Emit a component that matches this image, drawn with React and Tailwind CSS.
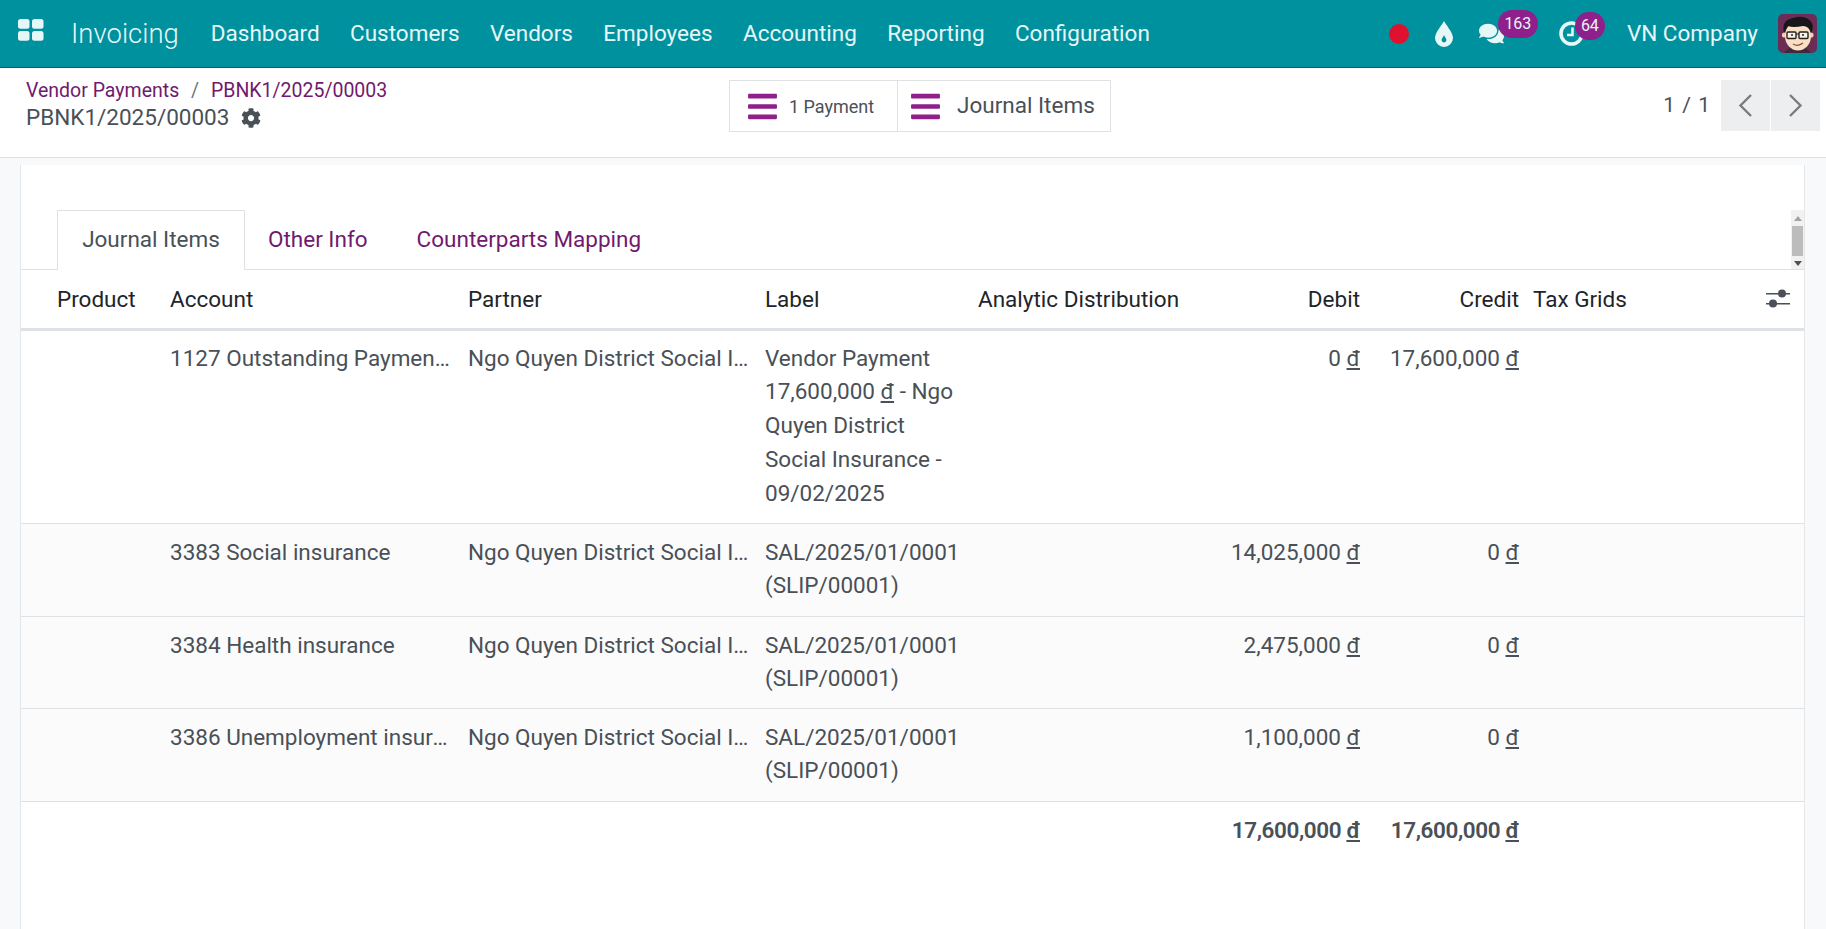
import React from 'react';
import { FaBars, FaCog, FaComments } from 'react-icons/fa';

const menuItems = ['Dashboard', 'Customers', 'Vendors', 'Employees', 'Accounting', 'Reporting', 'Configuration'];

const rows = [
  { account: '1127 Outstanding Payments Account', label: ['Vendor Payment', '17,600,000 ₫ - Ngo', 'Quyen District', 'Social Insurance -', '09/02/2025'], debit: '0', credit: '17,600,000', height: 'h-[194px]', pad: 'pt-[11px]' },
  { account: '3383 Social insurance', label: ['SAL/2025/01/0001', '(SLIP/00001)'], debit: '14,025,000', credit: '0', height: 'h-[93px]', pad: 'pt-[12px]', shaded: true },
  { account: '3384 Health insurance', label: ['SAL/2025/01/0001', '(SLIP/00001)'], debit: '2,475,000', credit: '0', height: 'h-[92px]', pad: 'pt-[12px]', shaded: true },
  { account: '3386 Unemployment insurance', label: ['SAL/2025/01/0001', '(SLIP/00001)'], debit: '1,100,000', credit: '0', height: 'h-[93px]', pad: 'pt-[12px]', shaded: true },
];

const Dong = () => <span className="underline underline-offset-2">đ</span>;

const Money = ({ value }) => (
  <>
    {value} <Dong />
  </>
);

const AppsIcon = () => (
  <svg width="26" height="22" viewBox="0 0 26 22" fill="#e6f7f8">
    <rect x="0" y="0" width="11.5" height="9.8" rx="2.5" />
    <rect x="14" y="0" width="11.5" height="9.8" rx="2.5" />
    <rect x="0" y="12" width="11.5" height="9.8" rx="2.5" />
    <rect x="14" y="12" width="11.5" height="9.8" rx="2.5" />
  </svg>
);

const DropIcon = () => (
  <svg width="18" height="26" viewBox="0 0 18 26">
    <path d="M9 0 C8 3 0 11 0 17 a9 9 0 0 0 18 0 C18 11 10 3 9 0 Z" fill="#e6f7f8" />
    <path d="M9 14 C8.6 15.5 6.6 17.5 6.6 19 a2.4 2.4 0 0 0 4.8 0 C11.4 17.5 9.4 15.5 9 14 Z" fill="#00919f" />
  </svg>
);

const ClockIcon = () => (
  <svg width="25" height="25" viewBox="0 0 25 25" fill="none" stroke="#e6f7f8">
    <circle cx="12.5" cy="12.5" r="10.5" strokeWidth="3.6" />
    <path d="M13.5 6.5 V14 H8" strokeWidth="2.6" />
  </svg>
);

const Avatar = () => (
  <svg width="39" height="39" viewBox="0 0 39 39" className="rounded-[5px]">
    <rect width="39" height="39" fill="#6b2d55" />
    <path d="M6 39 Q9 33 19 33 Q30 33 33 39 Z" fill="#3d2a3a" />
    <circle cx="6.5" cy="21" r="2.6" fill="#f3cfae" />
    <circle cx="33" cy="21" r="2.6" fill="#f3cfae" />
    <ellipse cx="20" cy="22" rx="13" ry="14.5" fill="#f8e0c6" />
    <path d="M6 19 Q3 6 15 4 Q28 0 34 9 Q36 14 33 19 Q31 12 25 12 Q15 14 10 12 Q8 15 6 19 Z" fill="#17171b" />
    <rect x="9" y="18" width="9" height="6.5" rx="1" fill="#fdf0e2" stroke="#222" strokeWidth="1.4" />
    <rect x="21" y="18" width="9" height="6.5" rx="1" fill="#fdf0e2" stroke="#222" strokeWidth="1.4" />
    <path d="M18 20 H21" stroke="#222" strokeWidth="1.2" />
    <circle cx="14" cy="21" r="1" fill="#222" />
    <circle cx="25" cy="21" r="1" fill="#222" />
    <path d="M15 30 Q20 33 25 29" stroke="#8a4a30" strokeWidth="1.2" fill="none" />
  </svg>
);

const SlidersIcon = () => (
  <svg width="24" height="20" viewBox="0 0 24 20" fill="#495057">
    <rect x="0" y="5" width="24" height="1.5" />
    <rect x="0" y="15" width="24" height="1.5" />
    <circle cx="16" cy="5.5" r="4" />
    <circle cx="7" cy="15.5" r="4" />
  </svg>
);

const Chevron = ({ d }) => (
  <svg width="15" height="23" viewBox="0 0 15 23" fill="none" stroke="#7a7d80" strokeWidth="2.4">
    <path d={d} />
  </svg>
);

const Navbar = () => (
  <header className="flex h-[68px] shrink-0 items-center border-b border-[#00606b] bg-[#00919f] text-[#e6f7f8]">
    <div className="mb-2 ml-[18px] flex items-center">
      <AppsIcon />
    </div>
    <span className="ml-[27px] text-[27.5px] font-light">Invoicing</span>
    <nav className="ml-[32px] flex gap-[30.4px] text-[22.5px]">
      {menuItems.map((item) => (
        <span key={item}>{item}</span>
      ))}
    </nav>
    <div className="ml-auto flex items-center">
      <span className="h-5 w-5 rounded-full bg-[#e0112f]" />
      <div className="ml-[26px] flex">
        <DropIcon />
      </div>
      <div className="relative ml-[26px]">
        <FaComments className="text-[25px]" />
        <span className="absolute -top-[11px] left-[19px] rounded-full bg-[#8f1f8a] px-[6.5px] text-[16px] leading-[28px]">163</span>
      </div>
      <div className="relative ml-[55px]">
        <ClockIcon />
        <span className="absolute -top-[9px] left-[16px] rounded-full bg-[#8f1f8a] px-[6px] text-[16px] leading-[28px]">64</span>
      </div>
      <span className="ml-[43px] text-[22.5px]">VN Company</span>
      <div className="ml-[20px] mr-[9px] flex">
        <Avatar />
      </div>
    </div>
  </header>
);

const ControlPanel = () => (
  <div className="relative flex h-[90px] shrink-0 items-start border-b border-[#dee2e6] bg-white">
    <div className="ml-[26px] mt-[10px]">
      <div className="text-[19.5px] leading-[26px] text-[#71196f]">
        Vendor Payments <span className="mx-[7px] text-[#6c757d]">/</span> PBNK1/2025/00003
      </div>
      <div className="flex items-center text-[22.5px] leading-[27px] text-[#495057]">
        PBNK1/2025/00003
        <FaCog className="ml-[12px] text-[20px]" />
      </div>
    </div>
    <div className="absolute left-[729px] top-[12px] flex h-[52px] border border-[#dee2e6]">
      <div className="flex w-[168px] items-center border-r border-[#dee2e6] pl-[16px] text-[18px] text-[#495057]">
        <FaBars className="mr-[10px] text-[33px] text-[#8f1f8a]" />1 Payment
      </div>
      <div className="flex w-[212px] items-center pl-[11px] text-[22.5px] text-[#495057]">
        <FaBars className="mr-[15px] text-[33px] text-[#8f1f8a]" />Journal Items
      </div>
    </div>
    <div className="ml-auto mr-[6px] mt-[12px] flex items-center">
      <span className="mr-[10px] pt-px text-[21px] tracking-[1px] text-[#495057]">1 / 1</span>
      <div className="flex h-[51px] w-[49px] items-center justify-center bg-[#eceef0]">
        <Chevron d="M13 1 L2.5 11.5 L13 22" />
      </div>
      <div className="ml-px flex h-[51px] w-[49px] items-center justify-center bg-[#eceef0]">
        <Chevron d="M2 1 L12.5 11.5 L2 22" />
      </div>
    </div>
  </div>
);

const Tabs = () => (
  <div className="relative flex h-[105px] shrink-0 items-end border-b border-[#dee2e6] pl-[36px] text-[22.5px]">
    <div className="flex h-[60px] w-[188px] translate-y-px items-center justify-center border border-b-0 border-[#dee2e6] bg-white pb-[2px] text-[#495057]">
      Journal Items
    </div>
    <div className="flex h-[60px] items-center pl-[23px] pt-px text-[#71196f]">Other Info</div>
    <div className="flex h-[60px] items-center pl-[49px] pt-px text-[#71196f]">Counterparts Mapping</div>
    <div className="absolute right-0 top-[45px] flex h-[59px] w-[13px] flex-col items-center bg-[#f1f1f1]">
      <span className="mt-[6px] h-0 w-0 border-x-[4px] border-b-[5px] border-x-transparent border-b-[#a3a3a3]" />
      <span className="mt-[5px] h-[30px] w-[11px] bg-[#bcbcbc]" />
      <span className="mt-[5px] h-0 w-0 border-x-[4px] border-t-[5px] border-x-transparent border-t-[#505050]" />
    </div>
  </div>
);

const JournalTable = () => (
  <table className="w-full table-fixed border-collapse text-[22.5px] leading-[33.9px] text-[#495057]">
    <colgroup>
      <col className="w-[141px]" />
      <col className="w-[298px]" />
      <col className="w-[297px]" />
      <col className="w-[213px]" />
      <col className="w-[240px]" />
      <col className="w-[158px]" />
      <col className="w-[159px]" />
      <col />
    </colgroup>
    <thead>
      <tr className="h-[59px] border-b-[3px] border-[#dee2e6] text-[#212529] *:pt-[2px]">
        <th className="pl-[36px] pr-2 text-left font-normal">Product</th>
        <th className="px-2 text-left font-normal">Account</th>
        <th className="px-2 text-left font-normal">Partner</th>
        <th className="px-2 text-left font-normal">Label</th>
        <th className="whitespace-nowrap px-2 text-left font-normal">Analytic Distribution</th>
        <th className="px-2 text-right font-normal">Debit</th>
        <th className="px-2 text-right font-normal">Credit</th>
        <th className="relative pl-[6px] pr-2 text-left font-normal">
          Tax Grids
          <span className="absolute right-[14px] top-[18px] flex">
            <SlidersIcon />
          </span>
        </th>
      </tr>
    </thead>
    <tbody>
      {rows.map((row) => (
        <tr key={row.account} className={`${row.height} border-b border-[#dee2e6] align-top ${row.shaded ? 'bg-[#fbfbfb]' : ''}`}>
          <td className={`pl-[36px] pr-2 ${row.pad}`} />
          <td className={`truncate px-2 ${row.pad}`}>{row.account}</td>
          <td className={`truncate px-2 ${row.pad}`}>Ngo Quyen District Social Insurance</td>
          <td className={`whitespace-nowrap px-2 ${row.pad}`}>
            {row.label.map((line) => (
              <div key={line}>
                {line.includes('₫') ? (
                  <>
                    17,600,000 <Dong /> - Ngo
                  </>
                ) : (
                  line
                )}
              </div>
            ))}
          </td>
          <td className={`px-2 ${row.pad}`} />
          <td className={`px-2 text-right ${row.pad}`}><Money value={row.debit} /></td>
          <td className={`px-2 text-right ${row.pad}`}><Money value={row.credit} /></td>
          <td className={`px-2 ${row.pad}`} />
        </tr>
      ))}
      <tr className="align-top font-semibold tracking-[-0.4px]">
        <td colSpan={5} />
        <td className="whitespace-nowrap px-2 pt-[12px] text-right"><Money value="17,600,000" /></td>
        <td className="whitespace-nowrap px-2 pt-[12px] text-right"><Money value="17,600,000" /></td>
        <td />
      </tr>
    </tbody>
  </table>
);

export default function App() {
  return (
    <div className="flex h-[929px] flex-col overflow-hidden bg-[#f8f9fa] font-['Roboto',sans-serif]">
      <Navbar />
      <ControlPanel />
      <main className="ml-[20px] mr-[21px] mt-[7px] flex-1 border-x border-[#e4e7ea] bg-white">
        <Tabs />
        <JournalTable />
      </main>
    </div>
  );
}
